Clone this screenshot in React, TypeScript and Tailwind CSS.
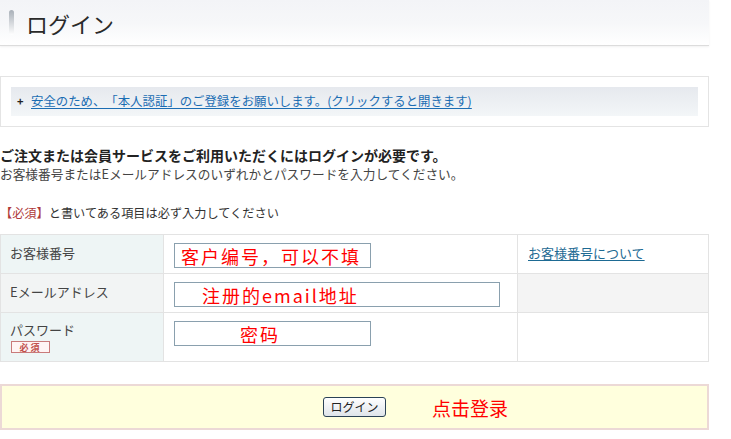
import React from "react";

const jp = { fontFamily: '"Noto Sans CJK JP", "Noto Sans", sans-serif' };
const sc = { fontFamily: '"Noto Sans CJK SC", sans-serif' };

function Badge() {
  return (
    <span className="inline-flex h-[12px] w-[39px] items-center justify-center border border-[#c97a7a] bg-[#fff4f4] text-[9px] font-bold leading-none tracking-[2px] text-[#c0504d]">
      必須
    </span>
  );
}

function FakeInput({ w, text, pl }: { w: string; text: string; pl: string }) {
  return (
    <div className={`flex h-[25px] ${w} items-center border border-[#8aa0ae] bg-white ${pl}`}>
      <span style={sc} className="whitespace-nowrap text-[18px] leading-none tracking-[2px] text-[#ff0000]">
        {text}
      </span>
    </div>
  );
}

export default function App() {
  return (
    <div style={jp} className="relative h-[439px] w-[731px] overflow-hidden bg-white text-[#333] [text-spacing-trim:space-all]">
      {/* title */}
      <div className="flex h-[46px] w-[709px] items-center border-b border-[#dcdcdc] bg-gradient-to-b from-[#f3f4f7] via-[#f6f7f9] to-white pl-[9px] shadow-[0_1px_2px_rgba(0,0,0,0.06)]">
        <div className="h-[25px] w-[5px] rounded-[3px] bg-gradient-to-b from-[#a9b0b8] to-white" />
        <h1 className="ml-[12px] text-[22px] leading-none text-[#2a2a2a]">ログイン</h1>
      </div>

      {/* notice */}
      <div className="mt-[30px] w-[709px] border border-[#e4e4e4] px-[10px] py-[10px]">
        <div className="flex h-[29px] items-center bg-gradient-to-b from-[#e6e9ee] to-[#f3f6f8] pl-[6px]">
          <span className="w-[14px] text-[11px] font-bold leading-none text-[#222]">+</span>
          <a className="text-[12.4px] leading-none text-[#1b6db3] underline underline-offset-2">
            安全のため、「本人認証」のご登録をお願いします。(クリックすると開きます)
          </a>
        </div>
      </div>

      {/* messages */}
      <div className="mt-[19px]">
        <p className="text-[14px] font-bold leading-[19px] text-[#222]">
          ご注文または会員サービスをご利用いただくにはログインが必要です。
        </p>
        <p className="text-[12.7px] leading-[18px] text-[#444]">
          お客様番号またはEメールアドレスのいずれかとパスワードを入力してください。
        </p>
      </div>
      <p className="mt-[21px] text-[12.2px] leading-[18px] text-[#333]">
        <span className="text-[#b03a3a]">【必須】</span>と書いてある項目は必ず入力してください
      </p>

      {/* table */}
      <div className="mt-[12px] w-[709px] border-x border-t border-[#e3e3e3] text-[13px] text-[#444]">
        <div className="grid h-[39px] grid-cols-[163px_354px_1fr] border-b border-[#e3e3e3]">
          <div className="border-r border-[#e3e3e3] bg-[#eef5f5] pl-[9px] pt-[8px]">お客様番号</div>
          <div className="border-r border-[#e3e3e3] pl-[10px] pt-[8px]">
            <FakeInput w="w-[197px]" text="客户编号，可以不填" pl="pl-[6px]" />
          </div>
          <div className="pl-[10px] pt-[8px]">
            <a className="text-[13px] text-[#1d6a93] underline underline-offset-2">お客様番号について</a>
          </div>
        </div>
        <div className="grid h-[39px] grid-cols-[163px_354px_1fr] border-b border-[#e3e3e3]">
          <div className="border-r border-[#e3e3e3] bg-[#f2f4f4] pl-[9px] pt-[8px]">Eメールアドレス</div>
          <div className="border-r border-[#e3e3e3] pl-[10px] pt-[8px]">
            <FakeInput w="w-[326px]" text="注册的email地址" pl="pl-[27px]" />
          </div>
          <div className="bg-[#f4f4f4]" />
        </div>
        <div className="grid h-[49px] grid-cols-[163px_354px_1fr] border-b border-[#e3e3e3]">
          <div className="flex flex-col items-start border-r border-[#e3e3e3] bg-[#eef5f5] pl-[9px] pt-[8px]">
            <span className="leading-[18px]">パスワード</span>
            <span className="ml-[1px] mt-[2px] flex">
              <Badge />
            </span>
          </div>
          <div className="border-r border-[#e3e3e3] pl-[10px] pt-[8px]">
            <FakeInput w="w-[197px]" text="密码" pl="pl-[65px]" />
          </div>
          <div />
        </div>
      </div>

      {/* submit */}
      <div className="mt-[22px] flex h-[46px] w-[709px] items-center justify-center border-2 border-[#ecd9d6] bg-[#ffffdd]">
        <div className="relative flex">
          <button className="h-[20px] w-[63px] rounded-[3px] border border-[#2b4256] bg-gradient-to-b from-white to-[#dfe4ea] text-[12px] leading-none text-[#222]">
            ログイン
          </button>
          <span
            style={sc}
            className="absolute left-full top-1/2 ml-[46px] -translate-y-1/2 whitespace-nowrap text-[19px] leading-none text-[#ff0000]"
          >
            点击登录
          </span>
        </div>
      </div>
    </div>
  );
}
